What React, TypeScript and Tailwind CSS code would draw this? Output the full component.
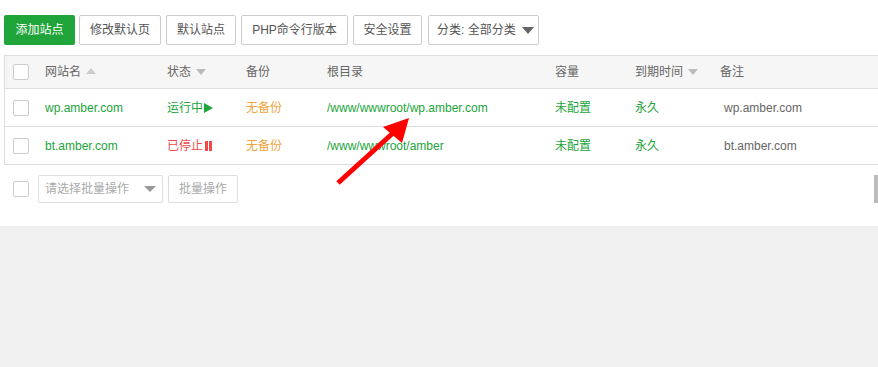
import React from "react";

const font = { fontFamily: '"Liberation Sans", "Noto Sans CJK SC", sans-serif' };

function Checkbox() {
  return <span className="block w-[16px] h-[16px] border border-[#ccc] rounded-[2px] bg-white" />;
}

function SortUp() {
  return <span className="inline-block ml-[5px] w-0 h-0 border-l-[5px] border-r-[5px] border-b-[6px] border-l-transparent border-r-transparent border-b-[#ccc] align-middle relative top-[-2px]" />;
}
function SortDown() {
  return <span className="inline-block ml-[5px] w-0 h-0 border-l-[5px] border-r-[5px] border-t-[6px] border-l-transparent border-r-transparent border-t-[#bbb] align-middle relative top-[-1px]" />;
}

const Btn = ({ children, w, ml }: { children: React.ReactNode; w: string; ml: string }) => (
  <div className={`h-[30px] ${w} ${ml} border border-[#ccc] rounded-[2px] bg-white text-[12px] text-[#555] flex items-center justify-center`}>{children}</div>
);

const cols = "grid grid-cols-[40px_122px_79px_81px_228px_80px_85px_1fr] items-center";

export default function App() {
  return (
    <div style={font} className="w-[878px] h-[367px] bg-white relative overflow-hidden">
      <div className="h-[226px] bg-white">
        <div className="flex items-center pt-[15px] pl-[4px]">
          <div className="h-[30px] w-[71px] rounded-[2px] bg-[#20a53a] text-white text-[12px] flex items-center justify-center">添加站点</div>
          <Btn w="w-[82px]" ml="ml-[4px]">修改默认页</Btn>
          <Btn w="w-[70px]" ml="ml-[5px]">默认站点</Btn>
          <Btn w="w-[107px]" ml="ml-[5px]">PHP命令行版本</Btn>
          <Btn w="w-[69px]" ml="ml-[5px]">安全设置</Btn>
          <div className="ml-[6px] h-[30px] w-[111px] border border-[#ccc] rounded-[2px] bg-white text-[12px] text-[#555] flex items-center pl-[8px] gap-[6px]">
            <span>分类: 全部分类</span>
            <span className="w-0 h-0 border-l-[6px] border-r-[6px] border-t-[7px] border-l-transparent border-r-transparent border-t-[#666]" />
          </div>
        </div>
        <div className="mt-[10px] ml-[4px] border-l border-t border-b border-[#ddd] text-[12px]">
          <div className={`${cols} h-[33px] bg-[#f6f6f6] border-b border-[#ddd] text-[#666]`}>
            <div className="pl-[8px]"><Checkbox /></div>
            <div>网站名<SortUp /></div>
            <div>状态<SortDown /></div>
            <div>备份</div>
            <div>根目录</div>
            <div>容量</div>
            <div>到期时间<SortDown /></div>
            <div>备注</div>
          </div>
          <div className={`${cols} h-[38px] border-b border-[#ddd]`}>
            <div className="pl-[8px]"><Checkbox /></div>
            <div className="text-[#20a53a]">wp.amber.com</div>
            <div className="text-[#20a53a] flex items-center">运行中<span className="ml-[1px] w-0 h-0 border-t-[5px] border-b-[5px] border-l-[9px] border-t-transparent border-b-transparent border-l-[#20a53a]" /></div>
            <div className="text-[#f0a43c]">无备份</div>
            <div className="text-[#20a53a]">/www/wwwroot/wp.amber.com</div>
            <div className="text-[#20a53a]">未配置</div>
            <div className="text-[#20a53a]">永久</div>
            <div className="text-[#666] pl-[4px]">wp.amber.com</div>
          </div>
          <div className={`${cols} h-[37px]`}>
            <div className="pl-[8px]"><Checkbox /></div>
            <div className="text-[#20a53a]">bt.amber.com</div>
            <div className="text-[#ef4a4a] flex items-center">已停止<span className="ml-[2px] flex gap-[1px]"><span className="w-[3px] h-[10px] bg-[#ef4a4a]" /><span className="w-[3px] h-[10px] bg-[#ef4a4a]" /></span></div>
            <div className="text-[#f0a43c]">无备份</div>
            <div className="text-[#20a53a]">/www/wwwroot/amber</div>
            <div className="text-[#20a53a]">未配置</div>
            <div className="text-[#20a53a]">永久</div>
            <div className="text-[#666] pl-[4px]">bt.amber.com</div>
          </div>
        </div>
        <div className="flex items-center mt-[10px] pl-[13px] relative">
          <Checkbox />
          <div className="ml-[9px] h-[28px] w-[125px] border border-[#ddd] rounded-[2px] flex items-center pl-[6px] text-[12px] text-[#aaa]">
            <span>请选择批量操作</span>
            <span className="ml-[15px] w-0 h-0 border-l-[6px] border-r-[6px] border-t-[6px] border-l-transparent border-r-transparent border-t-[#999]" />
          </div>
          <div className="ml-[5px] h-[28px] w-[70px] border border-[#ddd] rounded-[2px] flex items-center justify-center text-[12px] text-[#aaa]">批量操作</div>
          <div className="absolute right-0 top-[0px] w-[4px] h-[28px] bg-[#bbb]" />
        </div>
      </div>
      <div className="h-[141px] bg-[#f0f0f0]" />
      <svg className="absolute left-0 top-0" width="878" height="367">
        <line x1="338" y1="183" x2="393" y2="133" stroke="#ff0000" strokeWidth="5" />
        <polygon points="409,118 383,127 402,143" fill="#ff0000" />
      </svg>
    </div>
  );
}
